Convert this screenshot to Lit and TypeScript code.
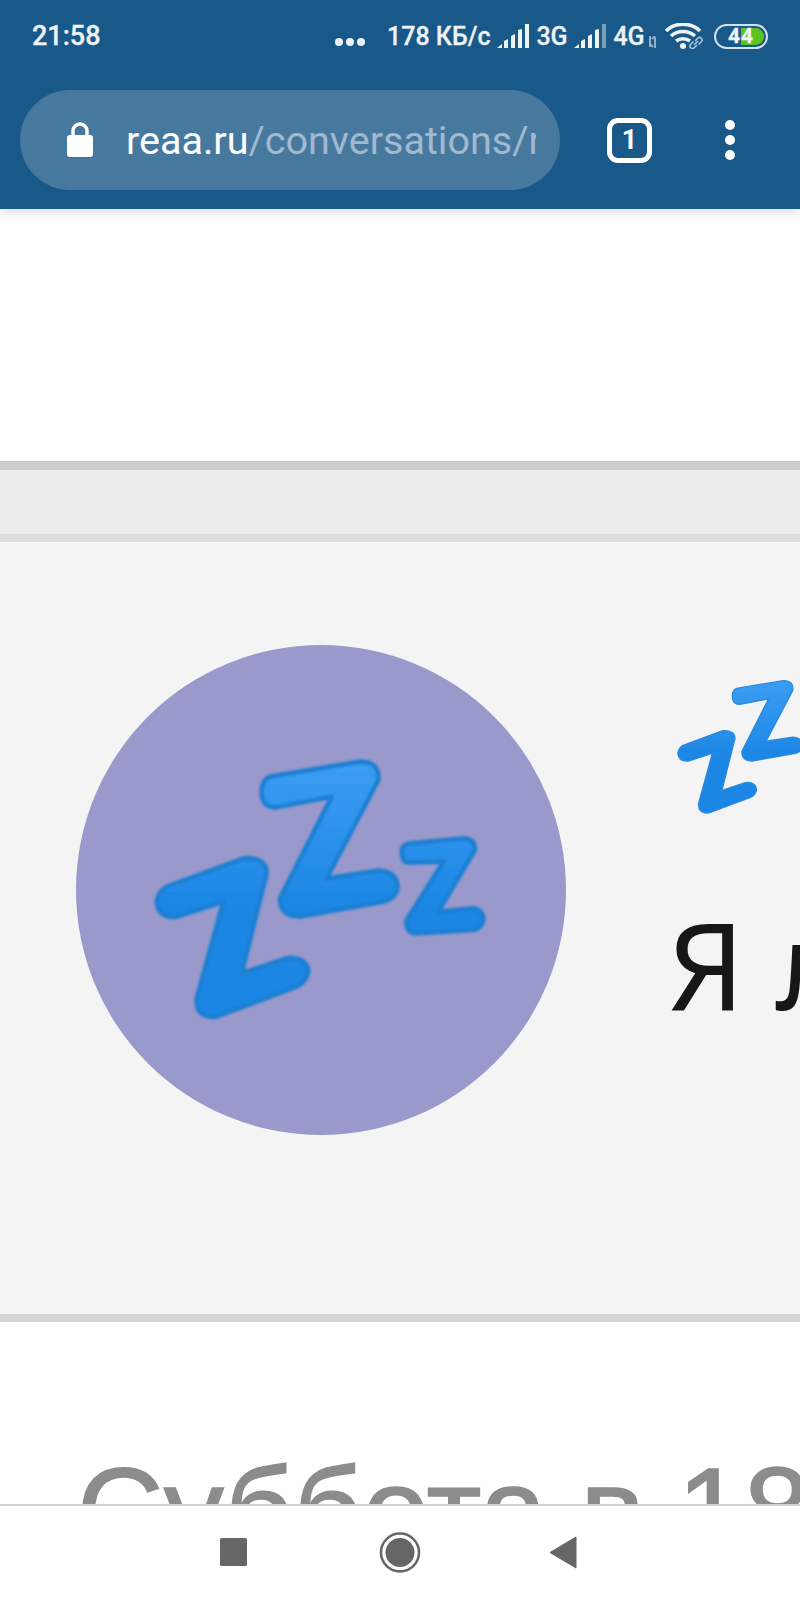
import { LitElement, html, css, svg } from "lit";
import { customElement } from "lit/decorators.js";

const bigZ = "M420 140 L690 95 Q750 95 745 150 L590 445 L745 422 Q800 425 803 470 Q800 505 760 515 L510 560 Q450 560 450 505 L605 200 L440 232 Q395 235 395 185 Q395 150 420 140 Z";
const leftZ = "M110 470 L340 385 Q410 380 410 430 L335 730 L470 685 Q530 680 535 725 Q530 755 500 770 L260 860 Q195 865 200 805 L280 515 L140 560 Q85 565 80 515 Q85 485 110 470 Z";
const smallZ = "M840 340 L1000 325 Q1035 325 1035 360 L925 545 L1030 535 Q1060 540 1060 570 Q1055 595 1030 600 L860 610 Q825 610 830 570 L940 395 L835 398 Q815 395 815 365 Q815 345 840 340 Z";

const zzz = (small: boolean) => svg`
  <defs>
    <linearGradient id=${small ? "gs" : "gb"} gradientUnits="userSpaceOnUse" x1="0" y1="100" x2="0" y2="540">
      <stop offset="0" stop-color="#3b9df2"></stop>
      <stop offset="1" stop-color="#1c86e4"></stop>
    </linearGradient>
    <filter id=${small ? "fs" : "fb"} x="-10%" y="-10%" width="120%" height="120%">
      <feGaussianBlur stdDeviation=${small ? 4 : 3}></feGaussianBlur>
    </filter>
  </defs>
  <g filter="url(#${small ? "fs" : "fb"})">
  ${[leftZ, bigZ].concat(small ? [] : [smallZ]).map(
    (d) => svg`
      <path d=${d} fill="url(#${small ? "gs" : "gb"})" stroke=${small ? "#2a8ae0" : "#1f80d3"} stroke-width=${small ? 8 : 14} stroke-linejoin="round"></path>`
  )}
  </g>`;

@customElement("app-root")
export class AppRoot extends LitElement {
  static styles = css`
    :host { display: block; width: 800px; height: 1600px; overflow: hidden; background: #fff; }
    .page { display: flex; flex-direction: column; height: 1600px; overflow: hidden; }
    .top { flex: none; height: 209px; background: #18598a; position: relative; z-index: 2; box-shadow: 0 3px 10px rgba(0,0,0,.14); box-sizing: border-box; }
    .status { height: 70px; display: flex; align-items: center; padding: 1px 0 0 32px; font: 500 25px Roboto, sans-serif; color: #eef2f5; white-space: nowrap; -webkit-text-stroke: .3px #eef2f5; }
    .time { font-size: 27px; width: 303px; }
    .dots { display: flex; gap: 3px; width: 52px; padding-top: 12px; }
    .dots i { width: 8px; height: 8px; border-radius: 50%; background: #eef2f5; }
    .speed { width: 110px; }
    .sig { flex: none; display: block; }
    .net { width: 44px; text-align: center; }
    .battery { position: relative; width: 54px; height: 25px; margin-left: 11px; box-sizing: border-box; border: 2.5px solid #d5e0e8; border-radius: 13px; display: flex; justify-content: flex-end; padding: 2px; }
    .battery b { width: 23px; background: #5cc31f; border-radius: 0 9px 9px 0; }
    .battery span { position: absolute; left: 12px; top: -3px; font: 700 21px/26px Roboto, sans-serif; letter-spacing: 1px; color: #f2f6f8; }
    .bar { display: flex; align-items: center; padding: 19px 0 0 20px; }
    .pill { width: 540px; height: 100px; box-sizing: border-box; border-radius: 50px; background: #47799f; display: flex; align-items: center; padding-left: 46px; gap: 32px; overflow: hidden; }
    .url { width: 410px; overflow: hidden; white-space: nowrap; font: 400 39.5px Roboto, sans-serif; color: #a0b9d0; flex: none; }
    .url b { font-weight: 400; color: #fff; }
    .tab { margin-left: 47px; width: 45px; height: 45px; box-sizing: border-box; border: 5px solid #fff; border-radius: 11px; color: #fff; display: flex; align-items: center; justify-content: center; font: 700 27px Roboto, sans-serif; }
    .menu { margin-left: 73px; display: flex; flex-direction: column; gap: 5px; }
    .menu i { width: 10px; height: 10px; border-radius: 50%; background: #fff; }
    .gap { flex: none; height: 252px; }
    .b1 { flex: none; height: 9px; background: #cccccc; }
    .b2 { flex: none; height: 64px; background: #ebecec; }
    .b3 { flex: none; height: 8px; background: #dcdedd; }
    .b4 { flex: none; height: 8px; background: #d6d6d6; }
    .card { flex: none; height: 772px; box-sizing: border-box; background: #f4f4f4; display: flex; padding: 103px 0 0 76px; overflow: hidden; }
    .avatar { flex: none; width: 490px; height: 490px; border-radius: 50%; background: #9a99cb; display: flex; justify-content: flex-start; align-items: flex-start; }
    .avatar svg { display: block; flex: none; margin: 85px 0 0 54px; }
    .side { flex: none; margin-left: 98px; padding-top: 19px; }
    .side svg { display: block; }
    .msg { font: 400 120px/140px "Noto Sans", "Open Sans", sans-serif; color: #171717; white-space: nowrap; margin: 74px 0 0 4px; }
    .rest { flex: 1; min-height: 0; overflow: hidden; background: #fff; padding-left: 77px; }
    .date { font: 400 120px/140px "Liberation Sans", Arial, sans-serif; color: #8c8c8c; white-space: nowrap; margin-top: 118px; -webkit-text-stroke: 1.5px #8c8c8c; }
    .nav { flex: none; height: 96px; box-sizing: border-box; border-top: 2px solid #d0d1d3; background: #fff; display: flex; align-items: flex-start; }
    .nav svg { display: block; flex: none; }
  `;

  render() {
    return html`
      <div class="page">
        <div class="top">
          <div class="status">
            <span class="time">21:58</span>
            <span class="dots"><i></i><i></i><i></i></span>
            <span class="speed">178 КБ/с</span>
            <svg class="sig" width="33" height="24" viewBox="0 0 33 24" fill="#eef2f5">
              <path d="M0 24l5-4v4zM7 24v-7l4-2v9zM14 24V12l4-2v14zM21 24V6l4-1v19zM28 24V0h4v24z"></path>
            </svg>
            <span class="net">3G</span>
            <svg class="sig" width="33" height="24" viewBox="0 0 33 24" fill="#eef2f5">
              <path d="M0 24l5-4v4zM7 24v-7l4-2v9zM14 24V12l4-2v14zM21 24V6l4-1v19z"></path>
              <path d="M28 24V0h4v24z" opacity=".45"></path>
            </svg>
            <span class="net">4G</span>
            <svg class="sig" width="11" height="12" viewBox="0 0 11 12" fill="none" stroke="#8fb0c8" stroke-width="2" style="margin:12px 7px 0 -4px">
              <path d="M3 0v11M6 11 3 8M8 12V1M5 3l3-3"></path>
            </svg>
            <svg class="sig" width="38" height="26" viewBox="0 0 38 26" fill="none" stroke="#eef2f5" stroke-width="3.6">
              <path d="M1 8C10-1 26-1 35 8"></path>
              <path d="M6 13c7-6 17-6 24 0"></path>
              <path d="M11 18c4-3 10-3 14 0"></path>
              <circle cx="18" cy="23" r="3" fill="#eef2f5" stroke="none"></circle>
              <path d="M30 18l3-3a2.5 2.5 0 0 1 3.5 3.5l-3 3M32 22l-3 3a2.5 2.5 0 0 1-3.5-3.5l3-3M29 22l4-4" stroke="#a9c2d6" stroke-width="1.6"></path>
            </svg>
            <span class="battery"><b></b><span>44</span></span>
          </div>
          <div class="bar">
            <div class="pill">
              <svg class="sig" width="28" height="36" viewBox="0 0 28 36">
                <path d="M7 16V9a7 7 0 0 1 14 0v7" fill="none" stroke="#fff" stroke-width="3.4"></path>
                <rect x="1" y="13" width="26" height="22" rx="3" fill="#fff"></rect>
              </svg>
              <div class="url"><b>reaa.ru</b>/conversations/reaa</div>
            </div>
            <div class="tab">1</div>
            <div class="menu"><i></i><i></i><i></i></div>
          </div>
        </div>
        <div class="gap"></div>
        <div class="b1"></div>
        <div class="b2"></div>
        <div class="b3"></div>
        <div class="card">
          <div class="avatar">
            <svg width="370" height="300" viewBox="0 0 1110 900">${zzz(false)}</svg>
          </div>
          <div class="side">
            <svg width="192" height="156" viewBox="0 0 1110 900">${zzz(true)}</svg>
            <div class="msg">Я л</div>
          </div>
        </div>
        <div class="b4"></div>
        <div class="rest"><div class="date">Суббота в 18</div></div>
        <div class="nav">
          <svg width="800" height="94" viewBox="0 1506 800 94" fill="#666">
            <rect x="220" y="1538" width="27" height="28" rx="1.5"></rect>
            <circle cx="400" cy="1552.5" r="19" fill="none" stroke="#666" stroke-width="2.5"></circle>
            <circle cx="400" cy="1552.5" r="14.5"></circle>
            <path d="M576 1537v31l-26-15.5z" stroke="#666" stroke-linejoin="round"></path>
          </svg>
        </div>
      </div>
    `;
  }
}
